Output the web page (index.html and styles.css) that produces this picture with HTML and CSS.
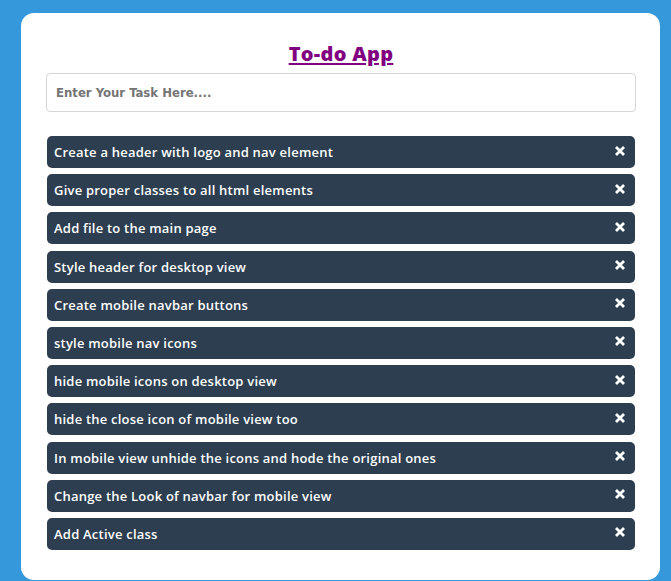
FILE: index.html
```html
<!DOCTYPE html>
<html>
<head>
<meta charset="utf-8">
<link rel="stylesheet" href="styles.css">
</head>
<body>
<div class="card">
  <h1 class="title"><a href="#">To-do App</a></h1>
  <div class="input-wrap"><input class="task-input" type="text" placeholder="Enter Your Task Here...." autofocus></div>
  <ul class="list">
    <li class="item"><span>Create a header with logo and nav element</span><svg class="x" viewBox="0 0 10 10"><path d="M1 1L9 9M9 1L1 9"/></svg></li>
    <li class="item"><span>Give proper classes to all html elements</span><svg class="x" viewBox="0 0 10 10"><path d="M1 1L9 9M9 1L1 9"/></svg></li>
    <li class="item"><span>Add file to the main page</span><svg class="x" viewBox="0 0 10 10"><path d="M1 1L9 9M9 1L1 9"/></svg></li>
    <li class="item"><span>Style header for desktop view</span><svg class="x" viewBox="0 0 10 10"><path d="M1 1L9 9M9 1L1 9"/></svg></li>
    <li class="item"><span>Create mobile navbar buttons</span><svg class="x" viewBox="0 0 10 10"><path d="M1 1L9 9M9 1L1 9"/></svg></li>
    <li class="item"><span>style mobile nav icons</span><svg class="x" viewBox="0 0 10 10"><path d="M1 1L9 9M9 1L1 9"/></svg></li>
    <li class="item"><span>hide mobile icons on desktop view</span><svg class="x" viewBox="0 0 10 10"><path d="M1 1L9 9M9 1L1 9"/></svg></li>
    <li class="item"><span>hide the close icon of mobile view too</span><svg class="x" viewBox="0 0 10 10"><path d="M1 1L9 9M9 1L1 9"/></svg></li>
    <li class="item"><span>In mobile view unhide the icons and hode the original ones</span><svg class="x" viewBox="0 0 10 10"><path d="M1 1L9 9M9 1L1 9"/></svg></li>
    <li class="item"><span>Change the Look of navbar for mobile view</span><svg class="x" viewBox="0 0 10 10"><path d="M1 1L9 9M9 1L1 9"/></svg></li>
    <li class="item"><span>Add Active class</span><svg class="x" viewBox="0 0 10 10"><path d="M1 1L9 9M9 1L1 9"/></svg></li>
  </ul>
</div>
</body>
</html>
```
FILE: styles.css
```css
html, body { margin: 0; padding: 0; }
body {
  background: #3498db;
  font-family: "Open Sans", sans-serif;
  padding: 13px 11px 0 21px;
  height: 581px;
  box-sizing: border-box;
  overflow: hidden;
}
.card {
  background: #fff;
  border-radius: 13px;
  width: 639px;
  height: 567px;
  box-sizing: border-box;
  padding: 29px 25px 0 26px;
}
.title {
  margin: 0 0 8px;
  text-align: center;
  font-size: 20px;
  font-weight: 800;
  line-height: 23px;
  letter-spacing: 0.3px;
}
.title a { color: #800080; text-decoration: underline; text-underline-offset: 2px; }
.input-wrap { margin-left: -1px; margin-right: -1px; }
.task-input {
  display: block;
  width: 100%;
  box-sizing: border-box;
  height: 39px;
  border: 1px solid #d6d6d6;
  border-radius: 4px;
  padding: 0 9px;
  font-family: "DejaVu Sans Condensed", "DejaVu Sans", sans-serif;
  font-weight: bold;
  font-size: 13px;
  outline: none;
  caret-color: #000;
}
.task-input::placeholder { color: #757575; }
.list {
  list-style: none;
  margin: 24px 0 0;
  padding: 0;
  display: flex;
  flex-direction: column;
  gap: 6.2px;
}
.item {
  background: #2c3e50;
  color: #fff;
  border-radius: 5px;
  height: 32px;
  display: flex;
  align-items: center;
  justify-content: space-between;
  padding: 0 10px 0 7px;
  font-size: 13px;
  font-weight: 600;
  letter-spacing: 0.22px;
}
.item span { padding-top: 0; }
.x { width: 10px; height: 10px; stroke: #fff; stroke-width: 2.8; fill: none; margin-bottom: 3px; }
```
